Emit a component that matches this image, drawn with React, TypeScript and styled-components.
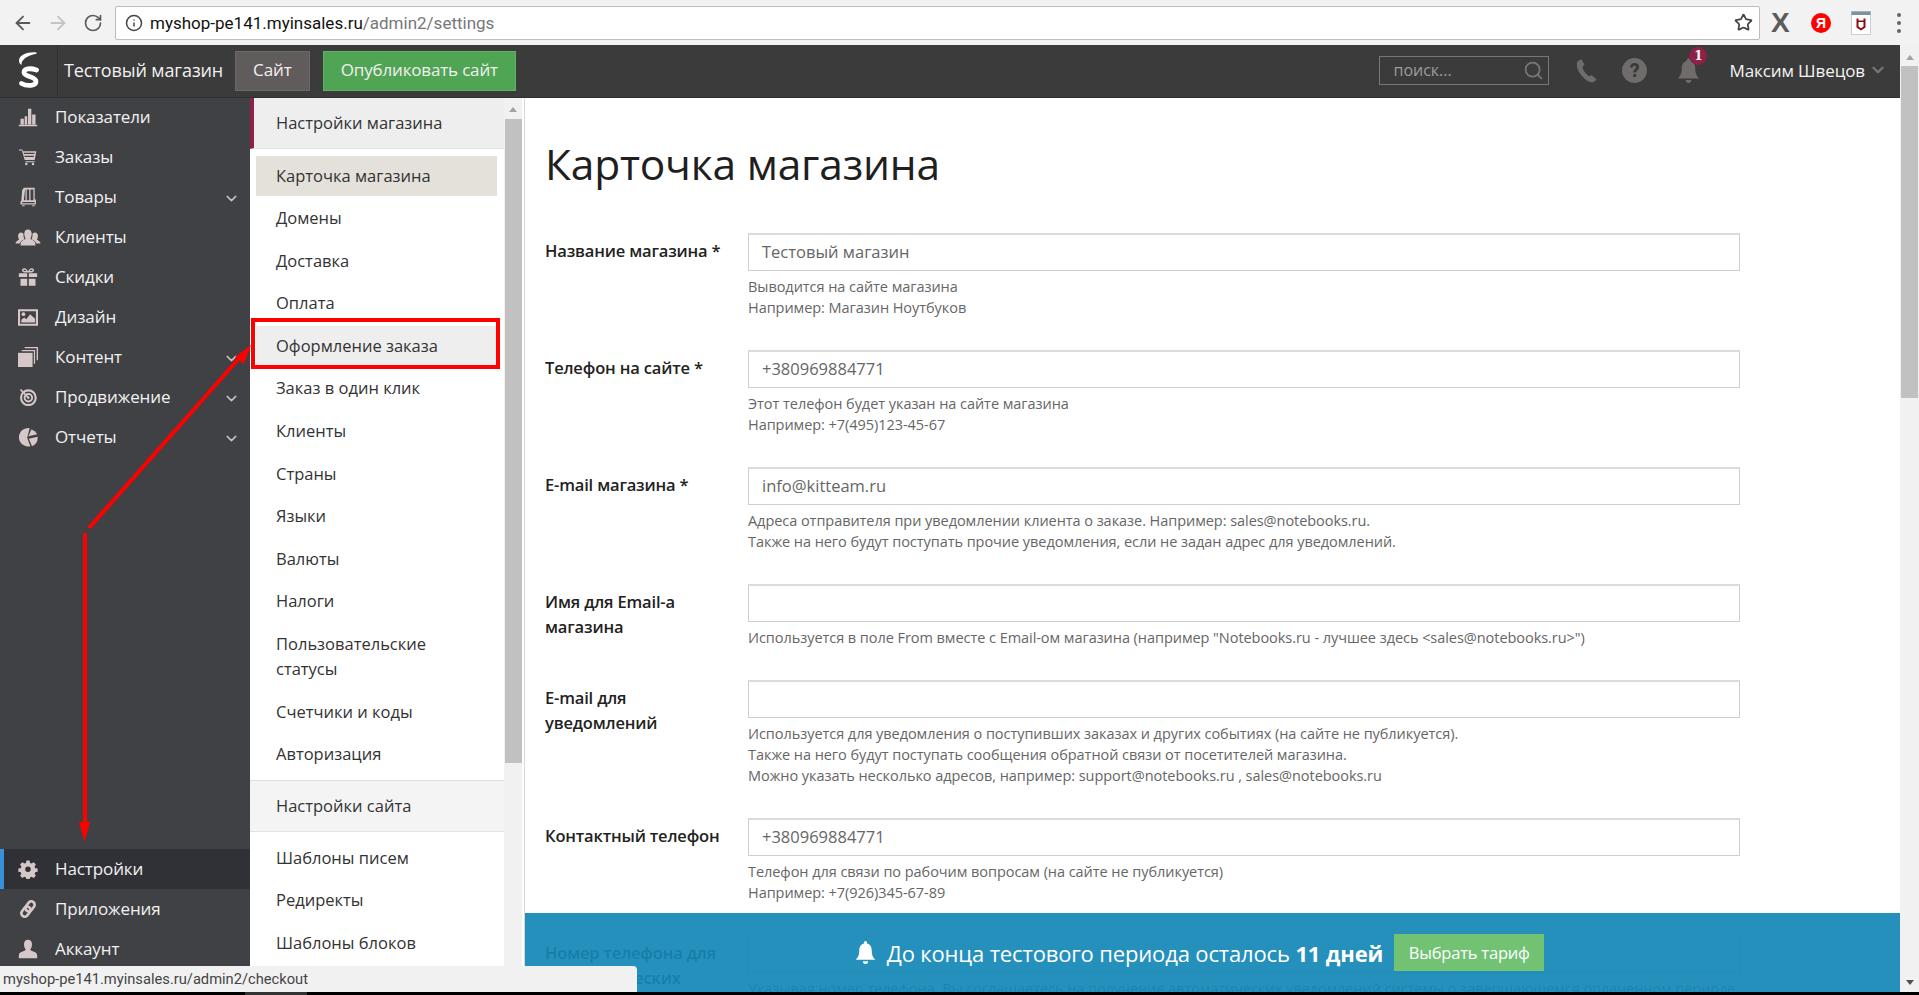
import React from "react";
import styled, { createGlobalStyle } from "styled-components";
import { ArrowLeft, ArrowRight, RotateCw, Info, Star, ChevronDown, Search } from "lucide-react";

const Global = createGlobalStyle`
  html, body { margin: 0; padding: 0; height: 100%; overflow: hidden; background: #fff; }
  body { font-family: "Open Sans", "Noto Sans", sans-serif; }
  * { box-sizing: border-box; }
`;

const Page = styled.div`
  position: relative;
  width: 1919px;
  height: 995px;
  display: flex;
  flex-direction: column;
  overflow: hidden;
`;

/* Browser toolbar */
const Browser = styled.div`
  height: 45px;
  flex: none;
  background: #f2f2f2;
  display: flex;
  align-items: center;
  padding: 0 0 0 5px;
  color: #5f6368;
`;
const NavIcon = styled.span<{ $dim?: boolean }>`
  width: 35px;
  flex: none;
  display: flex;
  justify-content: center;
  color: ${(p) => (p.$dim ? "#c4c4c4" : "#5a5a5a")};
`;
const Omnibox = styled.div`
  margin-left: 5px;
  width: 1645px;
  height: 34px;
  flex: none;
  background: #fff;
  border: 1px solid #bdbdbd;
  border-radius: 2px;
  display: flex;
  align-items: center;
  padding: 0 6px 0 9px;
  font-family: "Roboto", sans-serif;
  font-size: 17px;
  color: #111;
`;
const UrlPath = styled.span`
  color: #777;
`;
const UrlText = styled.div`
  margin-left: 7px;
  flex: 1;
`;
const Extensions = styled.div`
  flex: 1;
  display: flex;
  align-items: center;
  padding-left: 11px;
`;
const XMark = styled.span`
  font-family: "Liberation Sans", sans-serif;
  font-size: 28px;
  font-weight: 700;
  line-height: 1;
  color: #5c5c5c;
  width: 20px;
`;
const YaBadge = styled.span`
  width: 20px;
  height: 20px;
  margin-left: 20px;
  border-radius: 50%;
  background: #f00;
  color: #fff;
  font-family: "Liberation Sans", sans-serif;
  font-size: 14px;
  font-weight: 700;
  display: flex;
  align-items: center;
  justify-content: center;
`;
const ExtBox = styled.span`
  margin-left: 20px;
  display: flex;
`;
const Dots = styled.span`
  margin-left: 26px;
  display: flex;
  flex-direction: column;
  gap: 4px;
  span {
    width: 4px;
    height: 4px;
    border-radius: 50%;
    background: #666;
  }
`;

/* Main area */
const Frame = styled.div`
  flex: 1;
  min-height: 0;
  display: flex;
`;
const Viewport = styled.div`
  width: 1900px;
  flex: none;
  display: flex;
  flex-direction: column;
`;

const TopBar = styled.header`
  height: 53px;
  flex: none;
  background: #3b3b3b;
  border-bottom: 1px solid #2e2e2e;
  display: flex;
  align-items: center;
  color: #fff;
`;
const LogoCell = styled.div`
  width: 58px;
  height: 100%;
  flex: none;
  border-right: 1px solid #2f2f2f;
  display: flex;
  align-items: center;
  justify-content: flex-start;
  padding-left: 10px;
`;
const ShopName = styled.div`
  margin: -2px 0 0 6px;
  width: 171px;
  flex: none;
  font-size: 18px;
  letter-spacing: -0.1px;
  color: #f1f1f1;
`;
const TopButton = styled.div<{ $green?: boolean }>`
  height: 40px;
  flex: none;
  margin-right: 13px;
  margin-top: -1px;
  padding: 0 17px 2px;
  display: flex;
  align-items: center;
  font-size: 17px;
  letter-spacing: ${(p) => (p.$green ? "-0.17px" : "-0.05px")};
  color: #f2efef;
  background: ${(p) => (p.$green ? "#50a554" : "#615c5c")};
  border: 1px solid ${(p) => (p.$green ? "#5db362" : "#6c6868")};
`;
const TopRight = styled.div`
  margin: -2px 0 0 auto;
  display: flex;
  align-items: center;
  padding-right: 13px;
`;
const SearchBox = styled.div`
  width: 170px;
  height: 29px;
  border: 1px solid #777;
  display: flex;
  align-items: center;
  justify-content: space-between;
  padding: 0 4px 0 13px;
  font-size: 16px;
  color: #9c9c9c;
  margin-right: 23px;
`;
const TopIcon = styled.span<{ $w: number }>`
  position: relative;
  width: ${(p) => p.$w}px;
  flex: none;
  display: flex;
  justify-content: center;
  color: #716c6c;
`;
const Badge = styled.span`
  position: absolute;
  top: -10px;
  right: 1px;
  width: 18px;
  height: 18px;
  border-radius: 50%;
  background: #8e2147;
  color: #fff;
  font-family: "DejaVu Serif", serif;
  font-weight: 700;
  font-size: 12px;
  display: flex;
  align-items: center;
  justify-content: center;
`;
const UserName = styled.div`
  margin-left: 21px;
  font-size: 17px;
  letter-spacing: -0.1px;
  display: flex;
  align-items: center;
  gap: 4px;
  color: #f4f4f4;
  svg {
    color: #777;
  }
`;

const Body = styled.div`
  flex: 1;
  min-height: 0;
  display: flex;
`;

/* Left sidebar */
const Sidebar = styled.nav`
  width: 250px;
  flex: none;
  background: #404145;
  display: flex;
  flex-direction: column;
  justify-content: space-between;
  padding-bottom: 23px;
`;
const SideRow = styled.div<{ $active?: boolean }>`
  height: 40px;
  display: flex;
  align-items: center;
  position: relative;
  padding-bottom: 3px;
  font-size: 17px;
  letter-spacing: -0.1px;
  color: #f3f1f1;
  background: ${(p) => (p.$active ? "#303136" : "transparent")};
  border-left: ${(p) => (p.$active ? "4px solid #3a8fd9" : "0")};
  padding-left: ${(p) => (p.$active ? "51px" : "55px")};
`;
const SideIcon = styled.span`
  position: absolute;
  left: 15px;
  top: 7px;
  width: 26px;
  height: 24px;
  color: #d6c8c8;
  display: flex;
  align-items: center;
  justify-content: center;
`;
const ActiveSideIcon = styled(SideIcon)`
  left: 11px;
`;
const BottomGroup = styled.div`
  ${SideRow} {
    padding-bottom: 1.5px;
  }
  ${SideIcon} {
    top: 8px;
  }
`;
const SideChevron = styled.span`
  position: absolute;
  right: 10px;
  top: 12px;
  color: #c9c4c4;
  display: flex;
`;

/* Secondary navigation */
const SubNav = styled.div`
  width: 275px;
  flex: none;
  background: #fff;
  border-right: 1px solid #d8d8d8;
  display: flex;
`;
const SubList = styled.div`
  width: 254px;
  flex: none;
  overflow: hidden;
`;
const SubHead = styled.div<{ $first?: boolean }>`
  height: ${(p) => (p.$first ? "51px" : "52px")};
  display: flex;
  align-items: center;
  padding-left: ${(p) => (p.$first ? "22px" : "26px")};
  padding-bottom: 2px;
  font-size: 16.5px;
  color: #333;
  background: ${(p) => (p.$first ? "#eeeeee" : "#f4f4f4")};
  border-left: ${(p) => (p.$first ? "4px solid #8e2147" : "0")};
  border-top: ${(p) => (p.$first ? "0" : "1px solid #dedede")};
  border-bottom: 1px solid #e2e2e2;
  margin-bottom: ${(p) => (p.$first ? "7px" : "6px")};
  margin-top: ${(p) => (p.$first ? "0" : "5.4px")};
`;
const SubItem = styled.div<{ $state?: "active" | "hover" }>`
  margin: 0 7px 2.6px 6px;
  padding: 6.5px 20px 8.5px;
  font-size: 16.5px;
  line-height: 25px;
  color: #333;
  width: 241px;
  background: ${(p) =>
    p.$state === "active" ? "#e4e1da" : p.$state === "hover" ? "#eeeeee" : "transparent"};
`;
const SubScroll = styled.div`
  width: 18px;
  flex: none;
  background: #f1f1f1;
  display: flex;
  flex-direction: column;
  align-items: center;
  padding-top: 9px;
`;
const ArrowUp = styled.span`
  width: 0;
  height: 0;
  border-left: 4.5px solid transparent;
  border-right: 4.5px solid transparent;
  border-bottom: 5px solid #a3a3a3;
`;
const ArrowDown = styled.span`
  width: 0;
  height: 0;
  border-left: 4.5px solid transparent;
  border-right: 4.5px solid transparent;
  border-top: 5px solid #505050;
`;
const SubThumb = styled.div`
  width: 17px;
  height: 644px;
  margin-top: 7px;
  background: #c1c1c1;
`;

/* Content */
const Content = styled.main`
  position: relative;
  flex: 1;
  min-width: 0;
  overflow: hidden;
  padding: 41px 0 0 20px;
  background: #fff;
`;
const Title = styled.h1`
  margin: 0 0 44px;
  font-size: 42.5px;
  line-height: 50px;
  font-weight: 400;
  letter-spacing: -0.2px;
  color: #1f1f1f;
`;
const FormRow = styled.div`
  display: grid;
  grid-template-columns: 203px 992px;
  margin-bottom: 31px;
`;
const Label = styled.label`
  padding: 5px 20px 0 0;
  font-size: 16.5px;
  line-height: 25px;
  font-weight: 600;
  letter-spacing: -0.17px;
  color: #222;
`;
const Field = styled.div`
  height: 38px;
  border-style: solid;
  border-width: 2px 1px 1px;
  border-color: #dcdcdc #cfcfcf #cfcfcf;
  display: flex;
  align-items: center;
  padding: 0 13px 2px;
  font-size: 16.5px;
  color: #666;
  background: #fff;
`;
const Hint = styled.div`
  margin-top: 5px;
  padding-bottom: 1px;
  font-size: 14.5px;
  line-height: 21px;
  letter-spacing: -0.05px;
  color: #666;
`;

const Banner = styled.div`
  position: absolute;
  left: 0;
  right: 0;
  bottom: 0;
  height: 79px;
  background: rgba(19, 135, 182, 0.92);
  display: flex;
  align-items: center;
  justify-content: center;
  padding: 0 28px 0 0;
  color: #fff;
  font-size: 22px;
  letter-spacing: -0.15px;
`;
const BannerText = styled.div`
  margin-left: 9px;
  b {
    font-weight: 700;
  }
`;
const BannerButton = styled.div`
  width: 150px;
  height: 37px;
  margin-left: 11px;
  background: #72c274;
  display: flex;
  align-items: center;
  justify-content: center;
  font-size: 16.5px;
  letter-spacing: -0.2px;
`;

/* Page scrollbar */
const PageScroll = styled.div`
  width: 19px;
  flex: none;
  background: #f1f1f1;
  display: flex;
  flex-direction: column;
  align-items: center;
  padding: 10px 0 7px;
`;
const PageThumb = styled.div`
  width: 17px;
  height: 332px;
  margin-top: 6px;
  margin-bottom: auto;
  background: #c1c1c1;
`;

const BlackStrip = styled.div`
  height: 3px;
  flex: none;
  background: #000;
  display: flex;
  padding-left: 245px;
  span {
    width: 62px;
    background: #333;
  }
`;

const StatusBubble = styled.div`
  position: absolute;
  left: 0;
  bottom: 3px;
  width: 637px;
  height: 26px;
  background: #f1f1f1;
  border-top-right-radius: 4px;
  font-family: "Roboto", sans-serif;
  font-size: 14.7px;
  color: #444;
  display: flex;
  align-items: center;
  padding-left: 3px;
`;

const Annotation = styled.svg`
  position: absolute;
  left: 0;
  top: 0;
  pointer-events: none;
`;

/* Icons */
const I = (p: React.PropsWithChildren<{ w?: number; h?: number; box?: string }>) => (
  <svg width={p.w ?? 20} height={p.h ?? 20} viewBox={p.box ?? "0 0 24 24"} fill="currentColor">
    {p.children}
  </svg>
);

const icons: Record<string, React.ReactNode> = {
  chart: (
    <I>
      <path d="M1 23h22v-1.600H1zM3 21h4v-7H3zM8 21h3V11H8zM12 21h4V2h-4zM17 21h4V9h-4z" />
    </I>
  ),
  cart: (
    <I>
      <path d="M1 3h4l1 2h16l-2 10.500H8L5 5 4 4.200H1zM6.800 7l.3 1.500h12.600L20 7zM7.600 10.500l.3 1.500h11l.3-1.500zM9 17h11v1.200H9z" fillRule="evenodd" />
      <circle cx="10" cy="20.500" r="1.500" />
      <circle cx="18" cy="20.500" r="1.500" />
    </I>
  ),
  book: (
    <I>
      <path d="M7 1h13v14h1.500v6H3v-3.500l1-1 1-12.500zM8.500 3 7 15.800h2V3zM10.500 3v12.800h3V3zM15 3v12.800h3.500V3zM5 18v1.500h15V18z" fillRule="evenodd" />
      <path d="M5 22h3v1H5zM17 22h3v1h-3z" />
    </I>
  ),
  users: (
    <I box="0 3 28 19" w={28} h={19}>
      <path d="M14 4c2.800 0 4 2.200 4 4.500S17 13 16.500 14c2 1 5.500 2.500 5.500 5v2H6v-2c0-2.500 3.500-4 5.500-5C11 13 10 11 10 8.500S11.200 4 14 4z" />
      <path d="M6.500 7C8 7 9 8 9.300 9c-.5 2 .2 4 1 5.300C8 15.400 5.300 16.800 5 19H.5c0-2 2.500-3.300 4-4C4 14 3.300 12.500 3.300 10.500 3.300 8.500 4.800 7 6.500 7zM21.500 7c1.700 0 3.200 1.500 3.200 3.500 0 2-.7 3.500-1.200 4.500 1.500.7 4 2 4 4H23c-.3-2.200-3-3.600-5.300-4.700.8-1.300 1.500-3.300 1-5.300.3-1 1.300-2 2.800-2z" />
    </I>
  ),
  gift: (
    <I>
      <path d="M1 7.500h10V12H1zM13 7.500h10V12H13zM3 14h8v8.500H3zM13 14h8v8.500h-8z" />
      <path d="M7.500 1.500c2 0 3.600 2 4.500 4 .9-2 2.500-4 4.500-4 1.800 0 2.700 1.200 2.700 2.500 0 1.500-1.200 2.600-3 2.600H7.800C6 6.600 4.800 5.500 4.800 4c0-1.300.9-2.500 2.700-2.500zM7.600 3.400c-.6 0-1 .3-1 .7 0 .5.500.8 1.300.8h2.300C9.500 4 8.500 3.400 7.600 3.400zm8.800 0c-.9 0-1.900.6-2.600 1.500h2.300c.8 0 1.300-.3 1.300-.8 0-.4-.4-.7-1-.7z" fillRule="evenodd" />
    </I>
  ),
  image: (
    <I box="0 0 24 20" w={20} h={17}>
      <path d="M0 0h24v20H0zM2.500 2.500v15h19v-15zM4 16v-3.300l3.500-2.700 2.500 2 4.500-6 6 5.500V16z" fillRule="evenodd" />
      <circle cx="6.500" cy="6" r="2.200" />
    </I>
  ),
  stack: (
    <I>
      <path d="M8 0h16v16h-1.600V1.600H8z" />
      <path d="M4.500 3.500H20.500V20H19V5H4.500z" />
      <path d="M0 7h17.500v17H0z" />
    </I>
  ),
  target: (
    <svg width="18" height="18" viewBox="0 0 24 24" fill="none" stroke="currentColor">
      <circle cx="12.500" cy="13" r="9.800" strokeWidth="2.800" />
      <circle cx="12.500" cy="13" r="5" strokeWidth="2.600" />
      <circle cx="12.500" cy="13" r="1.200" fill="currentColor" strokeWidth="1" />
      <path d="M2 2l10.500 11" strokeWidth="2.400" />
    </svg>
  ),
  pie: (
    <I>
      <path d="M14 1.500A11 11 0 1 0 14.800 23L11 13z" />
      <path d="M16 3l-3.500 8 10.500-2.200A11 11 0 0 0 16 3z" />
      <path d="M13 14l3.800 9a11 11 0 0 0 6.700-11.300z" />
    </I>
  ),
  gear: (
    <I>
      <path d="M10 1h4l.6 3 2 .9 2.600-1.700 2.900 2.900-1.700 2.600.9 2 3 .6v4l-3 .6-.9 2 1.700 2.600-2.900 2.900-2.600-1.700-2 .9-.6 3h-4l-.6-3-2-.9-2.600 1.700-2.900-2.900 1.700-2.600-.9-2-3-.6v-4l3-.6.9-2L1.900 6.100l2.900-2.900 2.600 1.700 2-.9zM12 8.500a3.500 3.500 0 1 0 0 7 3.500 3.500 0 0 0 0-7z" fillRule="evenodd" transform="translate(.7 .9) scale(.94)" />
    </I>
  ),
  link: (
    <svg width="20" height="20" viewBox="0 0 24 24" fill="none" stroke="currentColor" strokeWidth="3.200">
      <g transform="rotate(-52 12 12)">
        <rect x="1.500" y="8" width="13" height="8" rx="4" />
        <rect x="9.500" y="8" width="13" height="8" rx="4" />
      </g>
    </svg>
  ),
  person: (
    <I>
      <path d="M12 1c3.200 0 4.800 2.500 4.800 5.500 0 2.700-1.200 4.900-2.200 6.500 1 1.700 8.400 2.200 8.400 6.500V23H1v-3.500C1 15.200 8.400 14.700 9.400 13c-1-1.600-2.200-3.800-2.200-6.500C7.200 3.500 8.800 1 12 1z" />
    </I>
  ),
};

const PhoneIcon = () => (
  <I w={25} h={25}>
    <path d="M6 1.500 3 3.500C2 7 3.500 12 7 16.500s7.500 7 11 7l3.500-2.300-.4-1.400-4.300-3.500-2.300 1.200C12.800 16.500 10.800 14.500 9.500 12.500 8.700 11 8.300 9.500 8.200 8.300L10 6.500 7.500 1.600z" />
  </I>
);
const HelpIcon = () => (
  <svg width="25" height="25" viewBox="0 0 25 25">
    <circle cx="12.500" cy="12.500" r="12.500" fill="currentColor" />
    <path d="M8 9.500c0-2.800 2-4.500 4.700-4.500 2.600 0 4.500 1.600 4.500 3.900 0 3-3 3.200-3 5.600h-3c0-3.500 2.800-3.800 2.800-5.300 0-.9-.7-1.500-1.700-1.500s-1.700.7-1.800 2.100zM11.200 16h3v3h-3z" fill="#3b3b3b" />
  </svg>
);
const BellIcon = ({ size = 26, color = "currentColor" }: { size?: number; color?: string }) => (
  <svg width={size} height={size} viewBox="0 0 24 24" fill={color}>
    <path d="M12 1a1.500 1.500 0 0 1 1.500 1.500v.8C16.800 4.200 18 7 18 10c0 5 1.500 7 3.500 9h-19c2-2 3.500-4 3.500-9 0-3 1.200-5.800 4.500-6.700v-.8A1.500 1.500 0 0 1 12 1z" />
    <path d="M9.500 20.500h5a2.500 2.500 0 0 1-5 0z" />
  </svg>
);
const LogoIcon = () => (
  <svg width="40" height="46" viewBox="0 0 40 46" fill="none">
    <path d="M26.500 4.500C18 3.500 9 7 9 12.500 9 14.500 10 16 11.500 17 11 12 17 7.500 26.500 5.800z" fill="#fff" />
    <path d="M26.500 22C20 19.800 14 20.500 14 24.500 14 29 26 28 26 33.500 26 38 17 38.500 11.500 35.500" stroke="#fff" strokeWidth="4.800" strokeLinecap="round" />
  </svg>
);
const ShieldExt = () => (
  <svg width="20" height="24" viewBox="0 0 20 24">
    <rect x=".5" y=".5" width="19" height="23" fill="#fff" stroke="#c9ced1" />
    <rect x=".5" y=".5" width="19" height="3.500" fill="#7c929c" />
    <path d="M5.500 7.500h2v2h5v-2h2v9l-4.500 3-4.500-3z M7.500 11v4.500l2.500 1.700 2.500-1.700V11z" fill="#8d1010" fillRule="evenodd" />
  </svg>
);

type Nav = { icon: string; label: string; more?: boolean; active?: boolean };
const mainNav: Nav[] = [
  { icon: "chart", label: "Показатели" },
  { icon: "cart", label: "Заказы" },
  { icon: "book", label: "Товары", more: true },
  { icon: "users", label: "Клиенты" },
  { icon: "gift", label: "Скидки" },
  { icon: "image", label: "Дизайн" },
  { icon: "stack", label: "Контент", more: true },
  { icon: "target", label: "Продвижение", more: true },
  { icon: "pie", label: "Отчеты", more: true },
];
const bottomNav: Nav[] = [
  { icon: "gear", label: "Настройки", active: true },
  { icon: "link", label: "Приложения" },
  { icon: "person", label: "Аккаунт" },
];

const shopItems = [
  "Карточка магазина",
  "Домены",
  "Доставка",
  "Оплата",
  "Оформление заказа",
  "Заказ в один клик",
  "Клиенты",
  "Страны",
  "Языки",
  "Валюты",
  "Налоги",
  "Пользовательские статусы",
  "Счетчики и коды",
  "Авторизация",
];
const siteItems = ["Шаблоны писем", "Редиректы", "Шаблоны блоков"];

const rows: { label: string; value: string; hints: string[] }[] = [
  {
    label: "Название магазина *",
    value: "Тестовый магазин",
    hints: ["Выводится на сайте магазина", "Например: Магазин Ноутбуков"],
  },
  {
    label: "Телефон на сайте *",
    value: "+380969884771",
    hints: ["Этот телефон будет указан на сайте магазина", "Например: +7(495)123-45-67"],
  },
  {
    label: "E-mail магазина *",
    value: "info@kitteam.ru",
    hints: [
      "Адреса отправителя при уведомлении клиента о заказе. Например: sales@notebooks.ru.",
      "Также на него будут поступать прочие уведомления, если не задан адрес для уведомлений.",
    ],
  },
  {
    label: "Имя для Email-а магазина",
    value: "",
    hints: ['Используется в поле From вместе с Email-ом магазина (например "Notebooks.ru - лучшее здесь <sales@notebooks.ru>")'],
  },
  {
    label: "E-mail для уведомлений",
    value: "",
    hints: [
      "Используется для уведомления о поступивших заказах и других событиях (на сайте не публикуется).",
      "Также на него будут поступать сообщения обратной связи от посетителей магазина.",
      "Можно указать несколько адресов, например: support@notebooks.ru , sales@notebooks.ru",
    ],
  },
  {
    label: "Контактный телефон",
    value: "+380969884771",
    hints: ["Телефон для связи по рабочим вопросам (на сайте не публикуется)", "Например: +7(926)345-67-89"],
  },
  {
    label: "Номер телефона для автоматических",
    value: "",
    hints: ["Указывая номер телефона, Вы соглашаетесь на получение автоматических уведомлений системы о завершающемся оплаченном периоде"],
  },
];

const SideItem = ({ item }: { item: Nav }) => {
  const Icon = item.active ? ActiveSideIcon : SideIcon;
  return (
    <SideRow $active={item.active}>
      <Icon>{icons[item.icon]}</Icon>
      {item.label}
      {item.more && (
        <SideChevron>
          <ChevronDown size={17} />
        </SideChevron>
      )}
    </SideRow>
  );
};

export default function App() {
  return (
    <Page>
      <Global />
      <Browser>
        <NavIcon><ArrowLeft size={22} /></NavIcon>
        <NavIcon $dim><ArrowRight size={22} /></NavIcon>
        <NavIcon><RotateCw size={20} /></NavIcon>
        <Omnibox>
          <Info size={18} color="#444" />
          <UrlText>
            myshop-pe141.myinsales.ru<UrlPath>/admin2/settings</UrlPath>
          </UrlText>
          <Star size={19} color="#444" strokeWidth={2.2} />
        </Omnibox>
        <Extensions>
          <XMark>X</XMark>
          <YaBadge>Я</YaBadge>
          <ExtBox><ShieldExt /></ExtBox>
          <Dots><span /><span /><span /></Dots>
        </Extensions>
      </Browser>
      <Frame>
        <Viewport>
          <TopBar>
            <LogoCell><LogoIcon /></LogoCell>
            <ShopName>Тестовый магазин</ShopName>
            <TopButton>Сайт</TopButton>
            <TopButton $green>Опубликовать сайт</TopButton>
            <TopRight>
              <SearchBox>
                поиск...
                <Search size={21} color="#777" />
              </SearchBox>
              <TopIcon $w={28}><PhoneIcon /></TopIcon>
              <TopIcon $w={68}><HelpIcon /></TopIcon>
              <TopIcon $w={40}>
                <BellIcon size={27} />
                <Badge>1</Badge>
              </TopIcon>
              <UserName>
                Максим Швецов
                <ChevronDown size={18} strokeWidth={3} />
              </UserName>
            </TopRight>
          </TopBar>
          <Body>
            <Sidebar>
              <div>{mainNav.map((n) => <SideItem key={n.label} item={n} />)}</div>
              <BottomGroup>{bottomNav.map((n) => <SideItem key={n.label} item={n} />)}</BottomGroup>
            </Sidebar>
            <SubNav>
              <SubList>
                <SubHead $first>Настройки магазина</SubHead>
                {shopItems.map((t, i) => (
                  <SubItem key={t} $state={i === 0 ? "active" : i === 4 ? "hover" : undefined}>
                    {t}
                  </SubItem>
                ))}
                <SubHead>Настройки сайта</SubHead>
                {siteItems.map((t) => <SubItem key={t}>{t}</SubItem>)}
              </SubList>
              <SubScroll>
                <ArrowUp />
                <SubThumb />
              </SubScroll>
            </SubNav>
            <Content>
              <Title>Карточка магазина</Title>
              {rows.map((r) => (
                <FormRow key={r.label}>
                  <Label>{r.label}</Label>
                  <div>
                    <Field>{r.value}</Field>
                    <Hint>{r.hints.map((h) => <div key={h}>{h}</div>)}</Hint>
                  </div>
                </FormRow>
              ))}
              <Banner>
                <BellIcon size={25} color="#fff" />
                <BannerText>До конца тестового периода осталось <b>11 дней</b></BannerText>
                <BannerButton>Выбрать тариф</BannerButton>
              </Banner>
            </Content>
          </Body>
        </Viewport>
        <PageScroll>
          <ArrowUp />
          <PageThumb />
          <ArrowDown />
        </PageScroll>
      </Frame>
      <BlackStrip><span /></BlackStrip>
      <StatusBubble>myshop-pe141.myinsales.ru/admin2/checkout</StatusBubble>
      <Annotation width="1919" height="995" viewBox="0 0 1919 995">
        <rect x="253" y="320" width="245" height="47" fill="none" stroke="#fd0000" strokeWidth="4" />
        <path d="M89 528 242 355" stroke="#fd0000" strokeWidth="4" fill="none" />
        <path d="M251 345 235 357 244 364z" fill="#fd0000" />
        <path d="M85 533V825" stroke="#fd0000" strokeWidth="4" fill="none" />
        <path d="M79 822h11l-5.500 20z" fill="#fd0000" />
      </Annotation>
    </Page>
  );
}
